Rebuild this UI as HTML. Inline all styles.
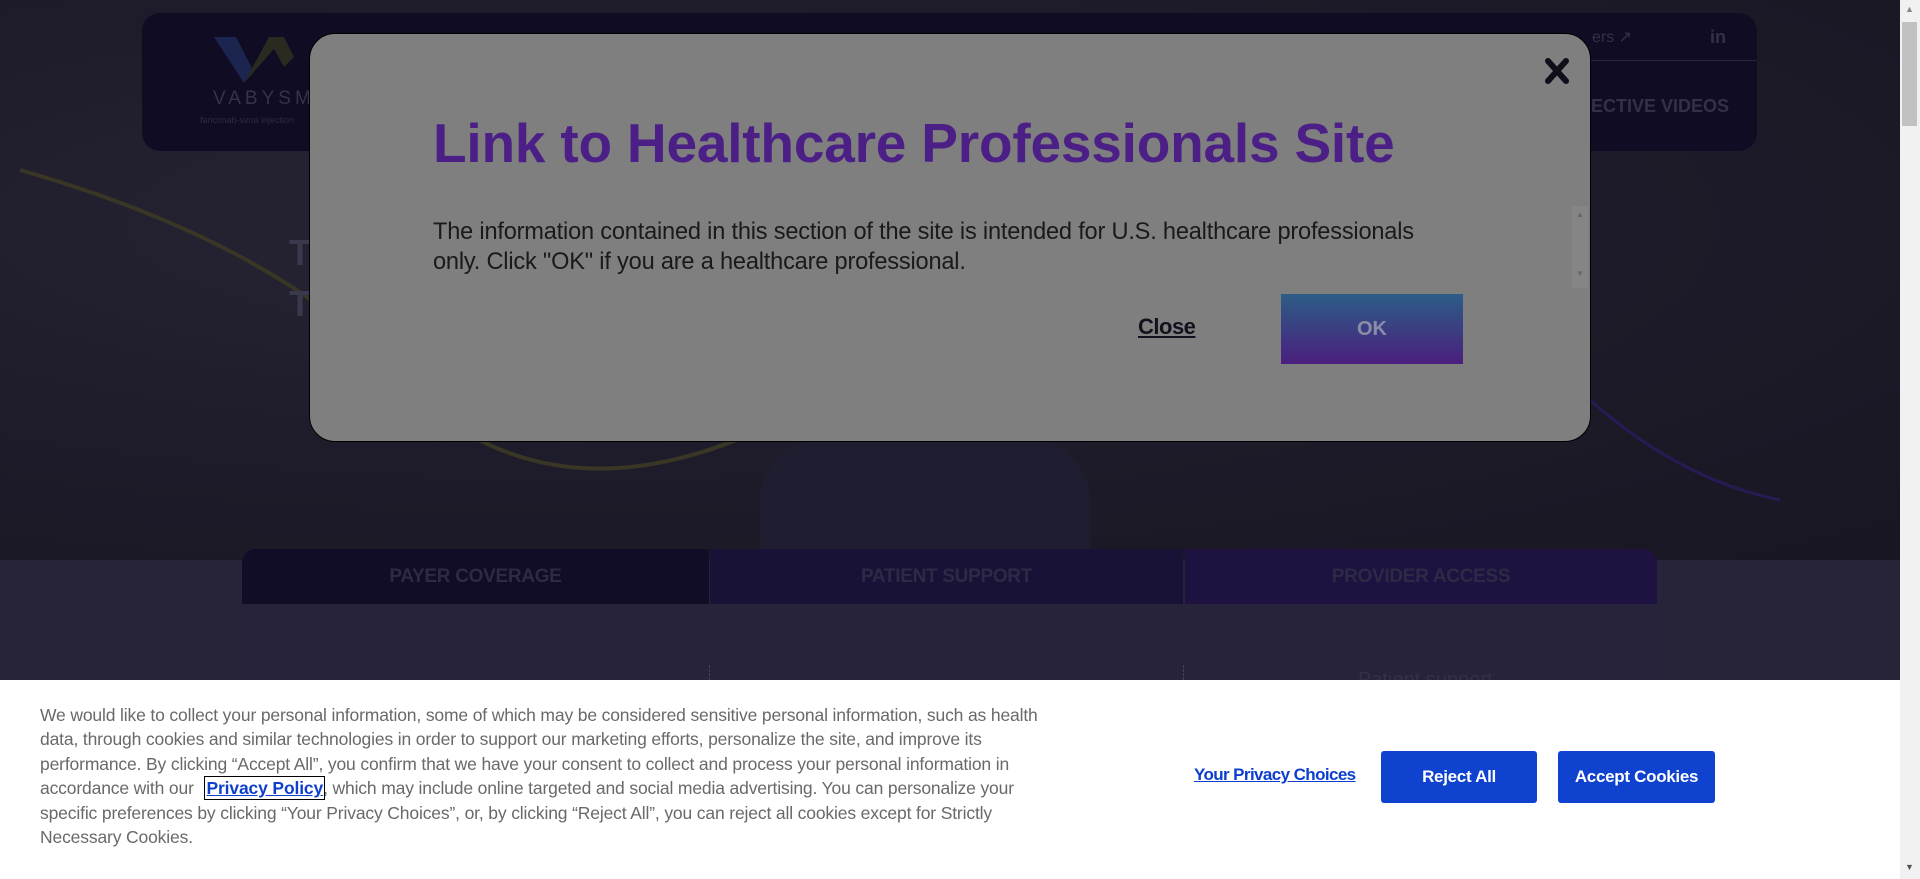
<!DOCTYPE html>
<html><head><meta charset="utf-8"><style>
*{margin:0;padding:0;box-sizing:border-box}
body{width:1920px;height:879px;overflow:hidden;position:relative;font-family:"Liberation Sans",sans-serif;background:#1e1c2b}
.abs{position:absolute}
.hero{left:0;top:0;width:1900px;height:560px;background:radial-gradient(ellipse at 30% 40%,#272534 0%,#1e1c2a 50%,#181622 100%)}
.lower{left:0;top:560px;width:1900px;height:120px;background:#272338}
.card{left:142px;top:13px;width:1615px;height:138px;background:#100c24;border-radius:18px}
.tab{top:549px;height:55px;color:#2d2a45;font-weight:bold;font-size:19px;text-align:center;line-height:55px;letter-spacing:-0.3px}
.modal{left:309px;top:33px;width:1282px;height:409px;background:#7f7f7f;border:1px solid #000;border-radius:26px}
.title{left:433px;top:111px;font-size:55px;font-weight:bold;color:#4b1f86;white-space:nowrap;letter-spacing:-0.2px}
.body{left:433px;top:217px;font-size:23.6px;line-height:30px;color:#1a1a1a;white-space:nowrap;letter-spacing:-0.2px}
.closel{left:1138px;top:314px;font-size:22px;font-weight:bold;color:#12121e;text-decoration:underline;letter-spacing:-0.5px}
.ok{left:1281px;top:294px;width:182px;height:70px;background:linear-gradient(#2c5d86,#4a1f7e);color:#8c8ca8;font-weight:bold;font-size:20px;text-align:center;line-height:70px}
.cookie{left:0;top:680px;width:1900px;height:199px;background:#fff}
.ctext{left:40px;top:703px;font-size:17.5px;line-height:24.4px;color:#696969;white-space:nowrap;letter-spacing:-0.15px}
.ctext a{color:#0d3fcc;font-weight:bold;text-decoration:underline;outline:1.5px solid #000;outline-offset:1px;margin-left:8px}
.btn{top:751px;width:156px;height:52px;background:#0e42cf;border-radius:3px;color:#fff;font-weight:bold;font-size:17px;text-align:center;line-height:52px;letter-spacing:-0.3px}
.sb{left:1900px;top:0;width:20px;height:879px;background:#f1f1f1}
</style></head><body>
<div class="abs hero"></div>
<div class="abs" style="left:760px;top:440px;width:330px;height:120px;background:#1f1d30;border-radius:60px 60px 0 0"></div>
<svg class="abs" style="left:0;top:0" width="1900" height="560"><path d="M20 170 Q300 250 420 400 Q560 520 760 430" stroke="#3a3626" stroke-width="4" fill="none"/><path d="M1590 400 Q1680 480 1780 500" stroke="#281a55" stroke-width="3" fill="none"/></svg>
<div class="abs" style="left:289px;top:232px;color:#3a384c;font-size:36px;font-weight:bold">T</div>
<div class="abs" style="left:289px;top:283px;color:#3a384c;font-size:36px;font-weight:bold">T</div>
<div class="abs lower"></div>
<div class="abs" style="left:242px;top:604px;width:1415px;height:76px;background:#26233a"></div>
<div class="abs tab" style="left:242px;width:467px;background:#110d26;border-top-left-radius:14px">PAYER COVERAGE</div>
<div class="abs tab" style="left:710px;width:473px;background:#181236">PATIENT SUPPORT</div>
<div class="abs tab" style="left:1185px;width:472px;background:#1e1240;border-top-right-radius:14px">PROVIDER ACCESS</div>
<div class="abs" style="left:709px;top:665px;height:15px;border-left:1px dashed #444"></div>
<div class="abs" style="left:1183px;top:665px;height:15px;border-left:1px dashed #444"></div>
<div class="abs" style="left:1358px;top:669px;color:#333048;font-size:20px">Patient support</div>
<div class="abs card"></div>
<svg class="abs" style="left:214px;top:37px" width="100" height="48"><path d="M0 0 L22 0 L40 35 L30 46Z" fill="#1c2550"/><path d="M30 46 L55 0 L70 0 L80 20 L70 30 L60 12Z" fill="#2b2a20"/></svg>
<div class="abs" style="left:213px;top:88px;color:#34334a;font-size:19px;letter-spacing:4px">VABYSMO</div>
<div class="abs" style="left:200px;top:115px;color:#2c2b40;font-size:9px">faricimab-svoa injection</div>
<div class="abs" style="left:1591px;top:60px;width:166px;border-top:1px solid #2a2640"></div>
<div class="abs" style="left:1592px;top:27px;color:#33314a;font-size:16px">ers ↗</div>
<div class="abs" style="left:1710px;top:27px;color:#33314a;font-size:18px;font-weight:bold">in</div>
<div class="abs" style="left:1591px;top:96px;color:#33314a;font-size:18px;font-weight:bold">ECTIVE VIDEOS</div>
<div class="abs modal"></div>
<svg class="abs" style="left:1543px;top:57px" width="28" height="28"><path d="M5 4 L23 24 M23 4 L5 24" stroke="#0f0f1a" stroke-width="6" stroke-linecap="round"/></svg>
<div class="abs title">Link to Healthcare Professionals Site</div>
<div class="abs body">The information contained in this section of the site is intended for U.S. healthcare professionals<br>only. Click "OK" if you are a healthcare professional.</div>
<div class="abs" style="left:1572px;top:206px;width:16px;height:82px;background:#858585"><div style="color:#666;font-size:8px;text-align:center;margin-top:4px">▲</div><div style="color:#666;font-size:8px;text-align:center;margin-top:50px">▼</div></div>
<div class="abs closel">Close</div>
<div class="abs ok">OK</div>
<div class="abs cookie"></div>
<div class="abs ctext">We would like to collect your personal information, some of which may be considered sensitive personal information, such as health<br>data, through cookies and similar technologies in order to support our marketing efforts, personalize the site, and improve its<br>performance. By clicking “Accept All”, you confirm that we have your consent to collect and process your personal information in<br>accordance with our <a>Privacy Policy</a>, which may include online targeted and social media advertising. You can personalize your<br>specific preferences by clicking “Your Privacy Choices”, or, by clicking “Reject All”, you can reject all cookies except for Strictly<br>Necessary Cookies.</div>
<div class="abs" style="left:1194px;top:765px;color:#0d3fcc;font-size:17px;font-weight:bold;text-decoration:underline;letter-spacing:-0.6px">Your Privacy Choices</div>
<div class="abs btn" style="left:1381px">Reject All</div>
<div class="abs btn" style="left:1558px;width:157px">Accept Cookies</div>
<div class="abs sb"><div style="position:absolute;left:2px;top:22px;width:15px;height:104px;background:#c1c1c1"></div><div style="position:absolute;left:5px;top:4px;font-size:9px;color:#888">▲</div><div style="position:absolute;left:5px;top:862px;font-size:9px;color:#555">▼</div></div>
</body></html>
